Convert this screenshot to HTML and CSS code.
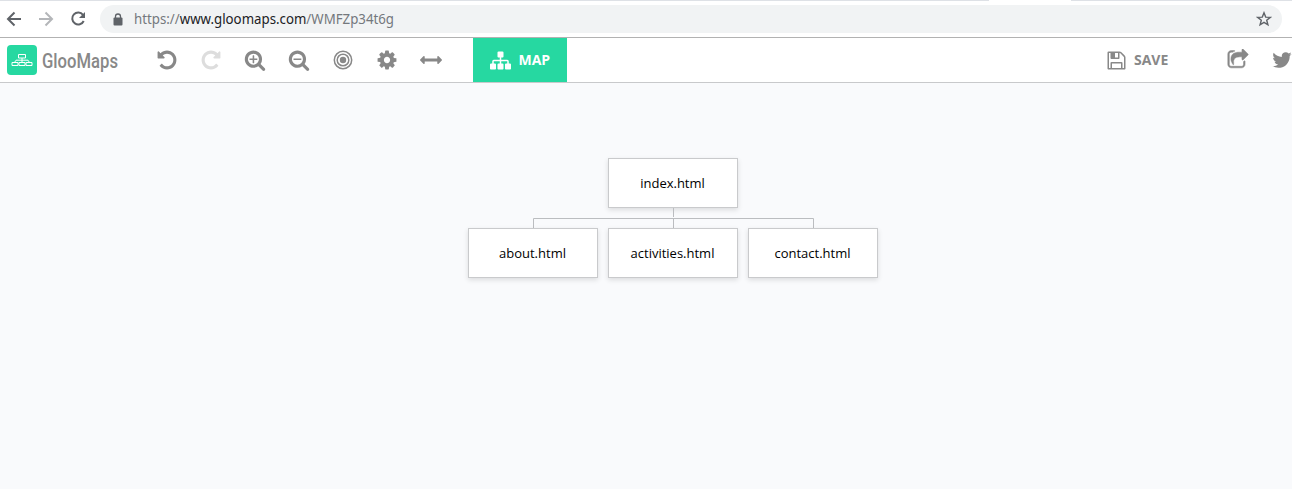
FILE: index.html
```html
<!DOCTYPE html>
<html lang="en">
<head>
<meta charset="utf-8">
<title>GlooMaps</title>
<link rel="stylesheet" href="styles.css">
</head>
<body>
<header class="browser">
  <div class="tab-strip"><span class="strip-left"></span><span class="strip-right"></span></div>
  <div class="address-row">
    <svg class="nav-icons" viewBox="0 0 100 28" fill="none" stroke-width="2">
      <path d="M21 14H8.500M14.500 7.500L8 14l6.500 6.500" stroke="#5f6368"/>
      <path d="M39 14h12.500M45.500 7.500L52 14l-6.500 6.500" stroke="#b4b6b9"/>
      <path d="M83 9.800A6 6 0 1 0 83.700 16" stroke="#5f6368"/>
      <path d="M85 7v6h-6z" fill="#5f6368"/>
    </svg>
    <div class="address">
      <svg class="lock" viewBox="0 0 10 13"><path d="M2.500 5V3.500a2.500 2.500 0 0 1 5 0V5" fill="none" stroke="#5f6368" stroke-width="1.300"/><rect x="0.500" y="4.500" width="9" height="8" rx="1" fill="#5f6368"/></svg>
      <svg class="url" viewBox="0 0 264 28"><text x="0" y="19" textLength="260" lengthAdjust="spacingAndGlyphs" fill="#74787d">https://<tspan fill="#202124">www.gloomaps.com</tspan>/WMFZp34t6g</text></svg>
      <svg class="star" viewBox="0 0 16 16"><path d="M8 1.800l1.700 4.300 4.600.3-3.600 2.900 1.200 4.500L8 11.300l-3.900 2.500 1.200-4.500-3.600-2.900 4.600-.3z" fill="none" stroke="#5f6368" stroke-width="1.400"/></svg>
    </div>
  </div>
</header>
<nav class="toolbar">
  <div class="logo">
    <svg class="logo-mark" viewBox="0 0 30 30" fill="none" stroke="#fff"><path d="M11.500 9.500h7v3.500h-7zM15 13v4.500M7.500 17.500l1.500-2.300h12l1.500 2.300M5 17.500h6v3H5zM12 17.500h6v3h-6zM19 17.500h6v3h-6z" stroke-width="1"/></svg>
    <svg class="logo-name" viewBox="0 0 84 44"><text x="1" y="30" textLength="76" lengthAdjust="spacingAndGlyphs">GlooMaps</text></svg>
  </div>
  <div class="tools">
    <svg class="icon" viewBox="0 0 1792 1792"><path d="M1664 896q0 156-61 298t-164 245-245 164-298 61q-172 0-327-72.500t-264-204.500q-7-10-6.500-22.500t8.500-20.500l137-138q10-9 25-9 16 2 23 12 73 95 179 147t225 52q104 0 198.500-40.500t163.500-109.500 109.500-163.500 40.500-198.500-40.500-198.500-109.500-163.500-163.500-109.500-198.500-40.500q-98 0-188 35.500t-160 101.500l137 138q31 30 14 69-17 40-59 40h-448q-26 0-45-19t-19-45v-448q0-42 40-59 39-17 69 14l130 129q107-101 244.500-156.500t284.500-55.500q156 0 298 61t245 164 164 245 61 298z"/></svg>
    <svg class="icon disabled" viewBox="0 0 1792 1792"><path transform="translate(1792 0) scale(-1 1)" d="M1664 896q0 156-61 298t-164 245-245 164-298 61q-172 0-327-72.500t-264-204.500q-7-10-6.500-22.500t8.500-20.500l137-138q10-9 25-9 16 2 23 12 73 95 179 147t225 52q104 0 198.500-40.500t163.500-109.500 109.500-163.500 40.500-198.500-40.500-198.500-109.500-163.500-163.500-109.500-198.500-40.500q-98 0-188 35.500t-160 101.500l137 138q31 30 14 69-17 40-59 40h-448q-26 0-45-19t-19-45v-448q0-42 40-59 39-17 69 14l130 129q107-101 244.500-156.500t284.500-55.500q156 0 298 61t245 164 164 245 61 298z"/></svg>
    <svg class="icon" viewBox="0 0 1792 1792"><path d="M1088 800v64q0 13-9.500 22.500t-22.500 9.500h-224v224q0 13-9.500 22.500t-22.500 9.500h-64q-13 0-22.500-9.500t-9.500-22.500v-224h-224q-13 0-22.500-9.500t-9.500-22.500v-64q0-13 9.500-22.500t22.500-9.500h224v-224q0-13 9.500-22.500t22.500-9.500h64q13 0 22.500 9.500t9.500 22.500v224h224q13 0 22.500 9.500t9.500 22.500zm128 32q0-185-131.500-316.500t-316.500-131.500-316.500 131.500-131.500 316.500 131.500 316.500 316.500 131.500 316.500-131.500 131.500-316.500zm512 832q0 53-37.500 90.500t-90.500 37.500q-54 0-90-38l-343-342q-179 124-399 124-143 0-273.500-55.500t-225-150-150-225-55.500-273.500 55.500-273.500 150-225 225-150 273.500-55.500 273.500 55.500 225 150 150 225 55.500 273.500q0 220-124 399l343 343q37 37 37 90z"/></svg>
    <svg class="icon" viewBox="0 0 1792 1792"><path d="M1088 800v64q0 13-9.500 22.500t-22.500 9.500h-576q-13 0-22.500-9.500t-9.500-22.500v-64q0-13 9.500-22.500t22.500-9.500h576q13 0 22.500 9.500t9.500 22.500zm128 32q0-185-131.500-316.500t-316.500-131.500-316.500 131.500-131.500 316.500 131.500 316.500 316.500 131.500 316.500-131.500 131.500-316.500zm512 832q0 53-37.500 90.500t-90.500 37.500q-54 0-90-38l-343-342q-179 124-399 124-143 0-273.500-55.500t-225-150-150-225-55.500-273.500 55.500-273.500 150-225 225-150 273.500-55.500 273.500 55.500 225 150 150 225 55.500 273.500q0 220-124 399l343 343q37 37 37 90z"/></svg>
    <svg class="icon" viewBox="0 0 22 22"><circle cx="11" cy="11" r="3.200"/><circle cx="11" cy="11" r="5.800" fill="none" stroke="#888" stroke-width="1.500"/><circle cx="11" cy="11" r="8.700" fill="none" stroke="#888" stroke-width="1.500"/></svg>
    <svg class="icon" viewBox="0 0 1792 1792"><path d="M1152 896q0-106-75-181t-181-75-181 75-75 181 75 181 181 75 181-75 75-181zm512-109v222q0 12-8 23t-20 13l-185 28q-19 54-39 91 35 50 107 138 10 12 10 25t-9 23q-27 37-99 108t-94 71q-12 0-26-9l-138-108q-44 23-91 38-16 136-29 186-7 28-36 28h-222q-14 0-24.500-8.500t-11.500-21.500l-28-184q-49-16-90-37l-141 107q-10 9-25 9-14 0-25-11-126-114-165-168-7-10-7-23 0-12 8-23 15-21 51-66.500t54-70.500q-27-50-41-99l-183-27q-13-2-21-12.500t-8-23.500v-222q0-12 8-23t19-13l186-28q14-46 39-92-40-57-107-138-10-12-10-24 0-10 9-23 26-36 98.500-107.500t94.500-71.500q13 0 26 10l138 107q44-23 91-38 16-136 29-186 7-28 36-28h222q14 0 24.500 8.500t11.500 21.500l28 184q49 16 90 37l142-107q9-9 24-9 13 0 25 10 129 119 165 170 7 8 7 22 0 12-8 23-15 21-51 66.500t-54 70.500q26 50 41 98l183 28q13 2 21 12.500t8 23.500z"/></svg>
    <svg class="icon" viewBox="0 0 1792 1792"><path d="M1792 896q0 26-19 45l-256 256q-19 19-45 19t-45-19-19-45v-128h-1024v128q0 26-19 45t-45 19-45-19l-256-256q-19-19-19-45t19-45l256-256q19-19 45-19t45 19 19 45v128h1024v-128q0-26 19-45t45-19 45 19l256 256q19 19 19 45z"/></svg>
  </div>
  <div class="map-tab">
    <svg class="icon-small" viewBox="0 0 1792 1792"><path d="M1792 1248v320q0 40-28 68t-68 28h-320q-40 0-68-28t-28-68v-320q0-40 28-68t68-28h96v-192h-512v192h96q40 0 68 28t28 68v320q0 40-28 68t-68 28h-320q-40 0-68-28t-28-68v-320q0-40 28-68t68-28h96v-192h-512v192h96q40 0 68 28t28 68v320q0 40-28 68t-68 28h-320q-40 0-68-28t-28-68v-320q0-40 28-68t68-28h96v-192q0-52 38-90t90-38h512v-192h-96q-40 0-68-28t-28-68v-320q0-40 28-68t68-28h320q40 0 68 28t28 68v320q0 40-28 68t-68 28h-96v192h512q52 0 90 38t38 90v192h96q40 0 68 28t28 68z"/></svg>
    <span class="label">MAP</span>
  </div>
  <div class="actions">
    <div class="save">
      <svg class="icon-small" viewBox="0 0 1792 1792"><path d="M512 1536h768v-384h-768v384zm896 0h128v-896q0-14-10-38.500t-20-34.500l-281-281q-10-10-34-20t-39-10v416q0 40-28 68t-68 28h-576q-40 0-68-28t-28-68v-416h-128v1280h128v-416q0-40 28-68t68-28h832q40 0 68 28t28 68v416zm-384-928v-320q0-13-9.500-22.500t-22.500-9.500h-192q-13 0-22.500 9.500t-9.500 22.500v320q0 13 9.500 22.500t22.500 9.500h192q13 0 22.500-9.500t9.500-22.500zm640 32v928q0 40-28 68t-68 28h-1344q-40 0-68-28t-28-68v-1344q0-40 28-68t68-28h928q40 0 88 20t76 48l280 280q28 28 48 76t20 88z"/></svg>
      <span class="label">SAVE</span>
    </div>
    <svg class="icon share" viewBox="0 0 1792 1792"><path d="M1472 989v259q0 119-84.500 203.500t-203.500 84.500h-832q-119 0-203.500-84.500t-84.500-203.500v-832q0-119 84.500-203.500t203.500-84.500h255q13 0 22.500 9.500t9.500 22.500q0 27-26 32-77 26-133 60-10 4-16 4h-112q-66 0-113 47t-47 113v832q0 66 47 113t113 47h832q66 0 113-47t47-113v-214q0-19 18-29 28-13 54-37 16-16 35-8 21 9 21 29zm237-496l-384 384q-18 19-45 19-12 0-25-5-39-17-39-59v-192h-160q-323 0-438 131-119 137-74 473 3 23-20 34-8 2-12 2-16 0-26-13-10-14-21-31t-39.500-68.500-49.500-99.500-38.500-114-17.500-122q0-49 3.500-91t14-90 28-88 47-81.500 68.500-74 94.500-61.500 124.500-48.500 159.500-30.500 196.500-11h160v-192q0-42 39-59 13-5 25-5 26 0 45 19l384 384q19 19 19 45t-19 45z"/></svg>
    <svg class="icon" viewBox="0 0 1792 1792"><path d="M1684 408q-67 98-162 167 1 14 1 42 0 130-38 259.500t-115.500 248.500-184.500 210.500-258 146-323 54.500q-271 0-496-145 35 4 78 4 225 0 401-138-105-2-188-64.500t-114-159.500q33 5 61 5 43 0 85-11-112-23-185.500-111.500t-73.500-205.500v-4q68 38 146 41-66-44-105-115t-39-154q0-88 44-163 121 149 294.500 238.500t371.500 99.500q-8-38-8-74 0-134 94.500-228.500t228.500-94.500q140 0 236 102 109-21 205-78-37 115-142 178 93-10 186-50z"/></svg>
  </div>
</nav>
<main class="canvas">
  <div class="tree">
    <div class="node">index.html</div>
    <svg class="links" viewBox="0 0 410 20" fill="none" stroke="#bbbdc0"><path d="M205.500 0v9M65.500 20v-9.500h280V20M205.500 11v9"/></svg>
    <div class="children">
      <div class="node">about.html</div>
      <div class="node">activities.html</div>
      <div class="node">contact.html</div>
    </div>
  </div>
</main>
</body>
</html>
```
FILE: styles.css
```css
* { box-sizing: border-box; }
body { margin: 0; height: 489px; display: flex; flex-direction: column; overflow: hidden; background: #f9fafc; font-family: "Open Sans", sans-serif; }
svg { display: block; flex: none; }
.browser { height: 38px; background: #fff; border-bottom: 1px solid #b2b2b2; }
.tab-strip { height: 1px; display: flex; justify-content: space-between; }
.strip-left { width: 989px; background: #dee1e6; }
.strip-right { width: 221px; background: #dee1e6; }
.address-row { display: flex; padding: 4px 10px 0 0; }
.nav-icons { width: 100px; height: 28px; }
.address { flex: 1; height: 28px; display: flex; align-items: center; padding: 0 10px 0 13px; border-radius: 14px; background: #f1f3f4; }
.lock { width: 10px; height: 13px; }
.url { width: 264px; height: 28px; margin-left: 11px; font-family: "Noto Sans", sans-serif; font-size: 14px; }
.star { width: 16px; height: 16px; margin-left: auto; }
.toolbar { height: 45px; display: flex; background: #fff; border-bottom: 1px solid #c8c9cb; color: #888; font-size: 14px; font-weight: 700; }
.logo { width: 156px; display: flex; align-items: center; padding-left: 6.500px; }
.logo-mark { width: 30px; height: 30px; border-radius: 4px; background: #26d8a1; }
.logo-name { width: 84px; height: 44px; margin-left: 4px; overflow: visible; fill: #888; font-family: Roboto, sans-serif; font-size: 21px; font-weight: 500; }
.tools { width: 317px; display: flex; align-items: center; gap: 22px; }
.icon { width: 22px; height: 22px; fill: #888; }
.icon-small { width: 21px; height: 21px; fill: currentColor; }
.share { stroke: #888; stroke-width: 40px; }
.disabled { fill: #ddd; }
.label { padding-bottom: 2px; }
.map-tab { width: 94px; display: flex; align-items: center; gap: 7.500px; padding-left: 17px; background: #26d8a1; color: #fff; }
.actions { display: flex; align-items: center; gap: 22px; margin-left: auto; margin-right: -1px; }
.save { width: 99px; display: flex; align-items: center; gap: 7px; }
.canvas { flex: 1; padding: 75px 0 0 468px; }
.tree { width: 410px; display: flex; flex-direction: column; align-items: center; }
.node { width: 130px; height: 50px; display: flex; align-items: center; justify-content: center; padding-right: 1px; background: #fff; border: 1px solid #c9cacc; box-shadow: 0 2px 5px rgba(0, 0, 0, .12); color: #000; font-size: 13px; }
.links { width: 410px; height: 20px; }
.children { display: flex; gap: 10px; }
```
